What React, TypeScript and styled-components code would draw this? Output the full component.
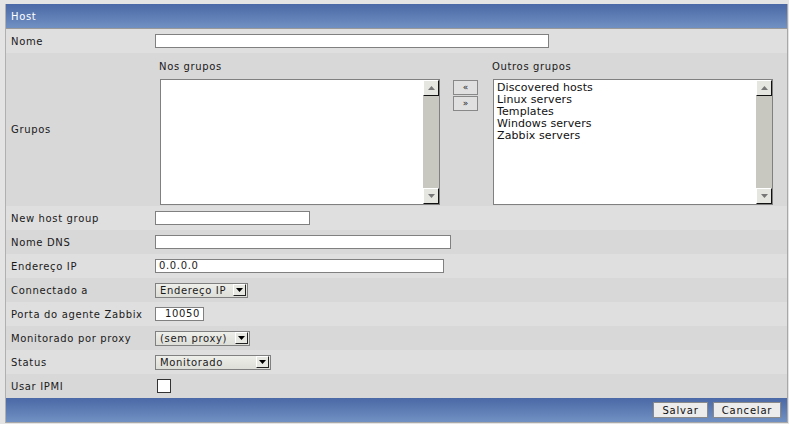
import React from "react";
import styled, { createGlobalStyle } from "styled-components";

const GlobalStyle = createGlobalStyle`
  html, body {
    margin: 0;
    padding: 0;
    background: #e4e4e4;
  }
  body {
    font-family: "DejaVu Sans", Verdana, sans-serif;
    font-size: 10px;
    letter-spacing: 0.65px;
    color: #1a1a1a;
  }
`;

const Page = styled.div`
  padding: 4px 1px 2px 5px;
`;

const Frame = styled.div`
  border-right: 1px solid #a8a8a8;
  border-bottom: 1px solid #a8a8a8;
  border-left: 1px solid #b0b0b0;
  width: 783px;
  box-sizing: border-box;
`;

const Bar = styled.div<{ $footer?: boolean }>`
  box-sizing: border-box;
  background: linear-gradient(#4a69a6, #7190c2);
  color: #fff;
  display: flex;
  align-items: center;
  justify-content: ${(p) => (p.$footer ? "flex-end" : "flex-start")};
  padding: ${(p) => (p.$footer ? "0 6px 0 0" : "0 0 0 5px")};
  gap: 5px;
  border-bottom: ${(p) => (p.$footer ? "none" : "1px solid #999")};
  height: ${(p) => (p.$footer ? "24px" : "25px")};
`;

const Row = styled.div<{ $dark?: boolean; $h?: number }>`
  display: flex;
  align-items: center;
  height: ${(p) => p.$h ?? 24}px;
  background: ${(p) => (p.$dark ? "#d8d8d8" : "#dfdfdf")};
`;

const Label = styled.div`
  width: 149px;
  padding-left: 5px;
  box-sizing: border-box;
  flex: none;
`;

const Value = styled.div<{ $bottom?: boolean }>`
  flex: 1;
  display: flex;
  align-items: center;
  align-self: ${(p) => (p.$bottom ? "flex-end" : "auto")};
  padding-bottom: ${(p) => (p.$bottom ? "1px" : "0")};
`;

const TextInput = styled.div<{ $w: number; $right?: boolean }>`
  width: ${(p) => p.$w}px;
  height: 14px;
  box-sizing: border-box;
  background: #fff;
  border: 1px solid #808080;
  padding: 0 3px;
  line-height: 12px;
  text-align: ${(p) => (p.$right ? "right" : "left")};
`;

const Select = styled.div<{ $w: number }>`
  width: ${(p) => p.$w}px;
  height: 15px;
  box-sizing: border-box;
  background: linear-gradient(#eeeeea, #deded8);
  border: 1px solid #808080;
  display: flex;
  align-items: center;
  justify-content: space-between;
  padding-left: 4px;
`;

const ArrowBtn = styled.div`
  width: 13px;
  height: 12px;
  margin-right: 1px;
  box-sizing: border-box;
  background: #e8e8e2;
  border-top: 1px solid #fff;
  border-left: 1px solid #fff;
  border-right: 1px solid #222;
  border-bottom: 1px solid #222;
  display: flex;
  align-items: center;
  justify-content: center;
`;

const Checkbox = styled.div`
  width: 14px;
  height: 14px;
  box-sizing: border-box;
  margin-left: 2px;
  background: #fff;
  border: 1px solid #333;
`;

const GroupsWrap = styled.div`
  display: flex;
  align-items: flex-start;
  padding-left: 4px;
`;

const GroupCol = styled.div`
  display: flex;
  flex-direction: column;
`;

const GroupCaption = styled.div`
  height: 14px;
  line-height: 14px;
  margin-bottom: 5px;
`;

const ListBox = styled.div`
  width: 280px;
  height: 126px;
  box-sizing: border-box;
  border: 1px solid #808080;
  background: #fff;
  display: flex;
  margin-left: 1px;
`;

const ListItems = styled.div`
  flex: 1;
  padding: 2px 3px;
  font-size: 11px;
  line-height: 12px;
  letter-spacing: 0.1px;
  color: #111;
`;

const Scroll = styled.div`
  width: 16px;
  background: #c8c8c0;
  display: flex;
  flex-direction: column;
  justify-content: space-between;
`;

const ScrollBtn = styled.div`
  width: 16px;
  height: 16px;
  box-sizing: border-box;
  background: #e6e6e0;
  border-top: 1px solid #fff;
  border-left: 1px solid #fff;
  border-right: 1px solid #111;
  border-bottom: 1px solid #111;
  display: flex;
  align-items: center;
  justify-content: center;
`;

const MoveButtons = styled.div`
  display: flex;
  flex-direction: column;
  gap: 1px;
  margin: 20px 14px 0 13px;
`;

const MoveBtn = styled.div`
  width: 25px;
  height: 15px;
  box-sizing: border-box;
  border: 1px solid #888;
  background: #e0e0e0;
  color: #222;
  display: flex;
  align-items: center;
  justify-content: center;
  font-size: 9px;
  line-height: 1;
  letter-spacing: 0;
`;

const FootButton = styled.div<{ $w: number }>`
  width: ${(p) => p.$w}px;
  height: 16px;
  box-sizing: border-box;
  background: #ececec;
  border: 1px solid #8a8a8a;
  color: #111;
  display: flex;
  align-items: center;
  justify-content: center;
  letter-spacing: 0.8px;
`;

const Tri = ({ up }: { up?: boolean }) => (
  <svg width="7" height="4" viewBox="0 0 7 4">
    <path d={up ? "M0 4 L3.5 0 L7 4 Z" : "M0 0 L7 0 L3.5 4 Z"} fill="#777" />
  </svg>
);

const DropTri = () => (
  <svg width="7" height="4" viewBox="0 0 7 4">
    <path d="M0 0 L7 0 L3.5 4 Z" fill="#000" />
  </svg>
);

const List = ({ items }: { items: string[] }) => (
  <ListBox>
    <ListItems>
      {items.map((i) => (
        <div key={i}>{i}</div>
      ))}
    </ListItems>
    <Scroll>
      <ScrollBtn>
        <Tri up />
      </ScrollBtn>
      <ScrollBtn>
        <Tri />
      </ScrollBtn>
    </Scroll>
  </ListBox>
);

const Dropdown = ({ w, text }: { w: number; text: string }) => (
  <Select $w={w}>
    <span>{text}</span>
    <ArrowBtn>
      <DropTri />
    </ArrowBtn>
  </Select>
);

export default function App() {
  return (
    <Page>
      <GlobalStyle />
      <Frame>
        <Bar>Host</Bar>
        <Row>
          <Label>Nome</Label>
          <Value>
            <TextInput $w={394} />
          </Value>
        </Row>
        <Row $dark $h={153}>
          <Label>Grupos</Label>
          <Value $bottom>
            <GroupsWrap>
              <GroupCol>
                <GroupCaption>Nos grupos</GroupCaption>
                <List items={[]} />
              </GroupCol>
              <MoveButtons>
                <MoveBtn>«</MoveBtn>
                <MoveBtn>»</MoveBtn>
              </MoveButtons>
              <GroupCol>
                <GroupCaption>Outros grupos</GroupCaption>
                <List
                  items={[
                    "Discovered hosts",
                    "Linux servers",
                    "Templates",
                    "Windows servers",
                    "Zabbix servers",
                  ]}
                />
              </GroupCol>
            </GroupsWrap>
          </Value>
        </Row>
        <Row>
          <Label>New host group</Label>
          <Value>
            <TextInput $w={155} />
          </Value>
        </Row>
        <Row $dark>
          <Label>Nome DNS</Label>
          <Value>
            <TextInput $w={296} />
          </Value>
        </Row>
        <Row>
          <Label>Endereço IP</Label>
          <Value>
            <TextInput $w={289}>0.0.0.0</TextInput>
          </Value>
        </Row>
        <Row $dark>
          <Label>Connectado a</Label>
          <Value>
            <Dropdown w={93} text="Endereço IP" />
          </Value>
        </Row>
        <Row>
          <Label>Porta do agente Zabbix</Label>
          <Value>
            <TextInput $w={49} $right>
              10050
            </TextInput>
          </Value>
        </Row>
        <Row $dark>
          <Label>Monitorado por proxy</Label>
          <Value>
            <Dropdown w={95} text="(sem proxy)" />
          </Value>
        </Row>
        <Row>
          <Label>Status</Label>
          <Value>
            <Dropdown w={116} text="Monitorado" />
          </Value>
        </Row>
        <Row $dark>
          <Label>Usar IPMI</Label>
          <Value>
            <Checkbox />
          </Value>
        </Row>
        <Bar $footer>
          <FootButton $w={55}>Salvar</FootButton>
          <FootButton $w={68}>Cancelar</FootButton>
        </Bar>
      </Frame>
    </Page>
  );
}
